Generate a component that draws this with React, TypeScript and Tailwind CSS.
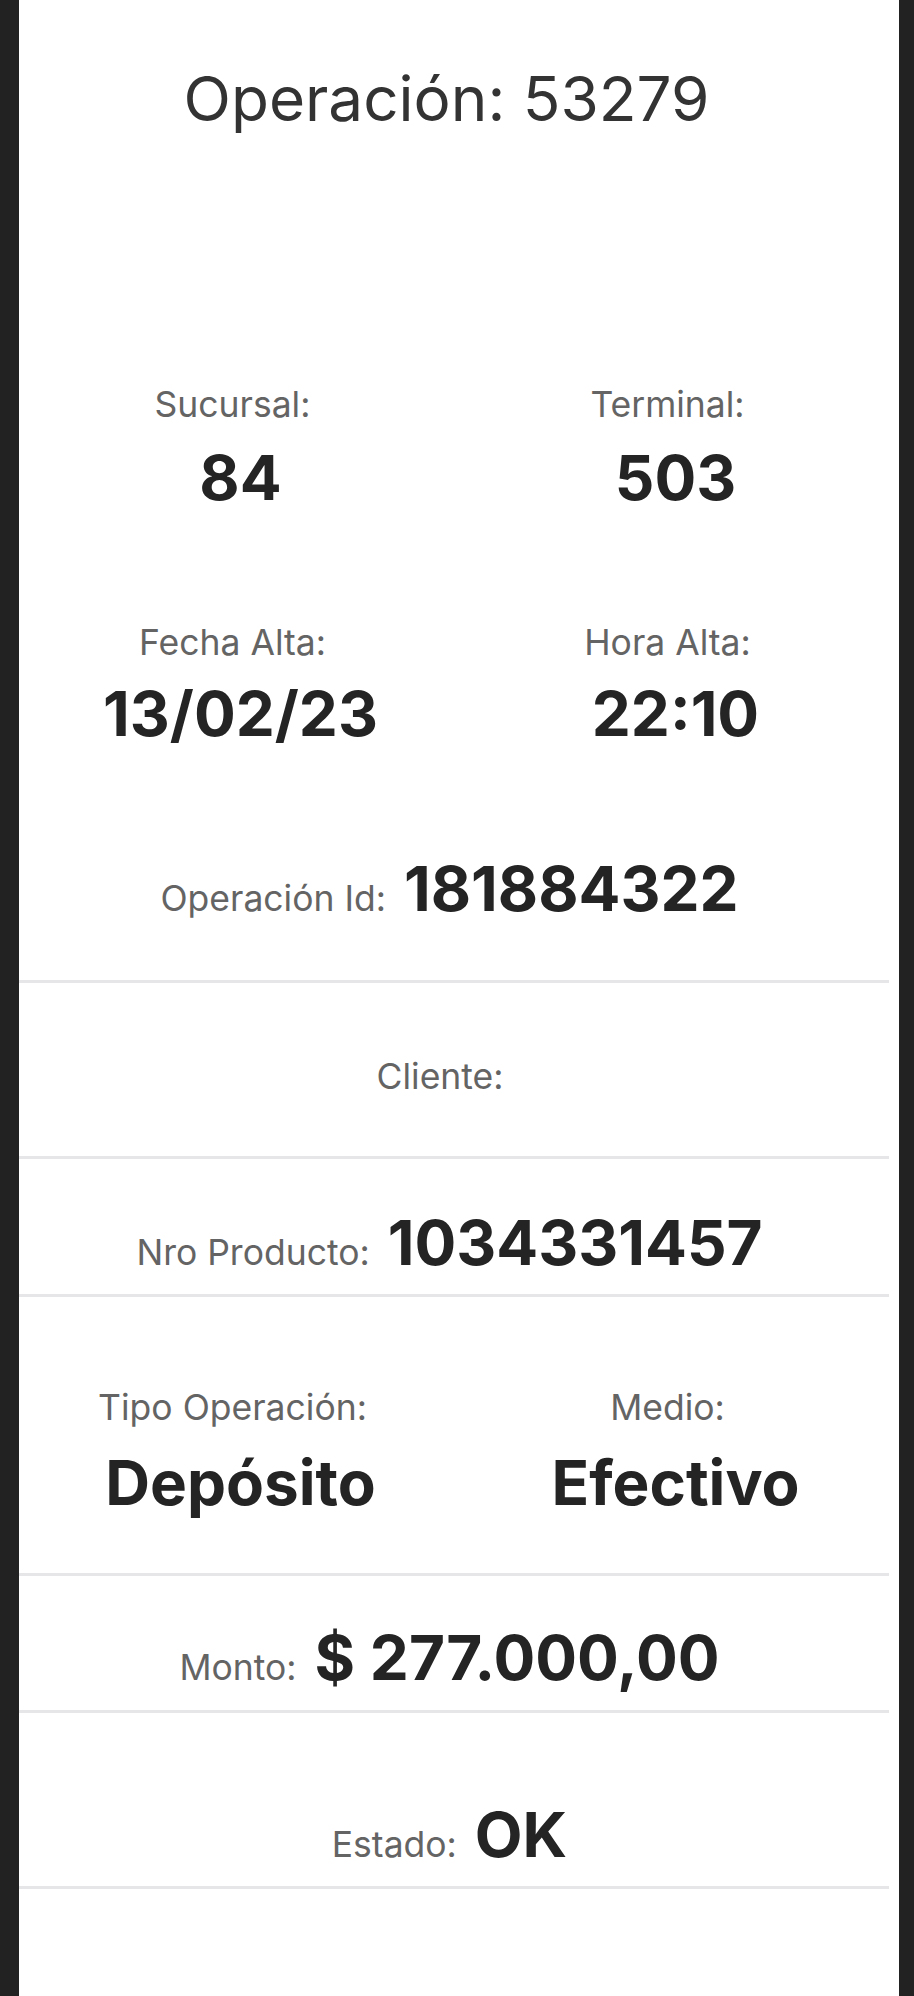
import React from "react";

const font = { fontFamily: "Inter, 'Noto Sans', sans-serif" };

function Divider() {
  return <div className="h-[3px] bg-[#e6e6e9] mr-[10px]" />;
}

function Field({ label, value, valueH }: { label: string; value: string; valueH: string }) {
  return (
    <div className="flex flex-col items-center">
      <div className="h-[60px] pt-[3px] flex items-center pr-[8px] text-[35.5px] leading-none text-[#646464]">{label}</div>
      <div className={`${valueH} flex items-center pl-[8px] text-[62px] leading-none font-bold text-[#242424]`}>{value}</div>
    </div>
  );
}

function Inline({ label, value }: { label: string; value: string }) {
  return (
    <div className="flex items-baseline justify-center gap-[18px] pr-[19px]">
      <span className="text-[35.5px] leading-none text-[#646464]">{label}</span>
      <span className="text-[62px] leading-none font-bold text-[#242424]">{value}</span>
    </div>
  );
}

export default function App() {
  return (
    <div className="min-h-[1996px] w-full bg-[#222222] pl-[19px] pr-[15px]" style={font}>
      <div className="min-h-[1996px] bg-white">
        <div className="h-[198px] flex items-center justify-center pr-[25px] text-[62px] leading-none text-[#333333]">
          Operación: 53279
        </div>
        <div className="h-[175px]" />
        <div className="grid grid-cols-2 pr-[10px]">
          <Field label="Sucursal:" value="84" valueH="h-[90px]" />
          <Field label="Terminal:" value="503" valueH="h-[90px]" />
        </div>
        <div className="h-[88px]" />
        <div className="grid grid-cols-2 pr-[10px]">
          <Field label="Fecha Alta:" value="13/02/23" valueH="h-[86px]" />
          <Field label="Hora Alta:" value="22:10" valueH="h-[86px]" />
        </div>
        <div className="h-[87px]" />
        <div className="h-[86px] pt-[3px] flex items-center justify-center">
          <Inline label="Operación Id:" value="181884322" />
        </div>
        <div className="h-[50px]" />
        <Divider />
        <div className="h-[173px] pt-[15px] flex items-center justify-center pr-[38px] text-[35.5px] leading-none text-[#646464]">
          Cliente:
        </div>
        <Divider />
        <div className="h-[135px] pt-[33px] flex items-center justify-center">
          <Inline label="Nro Producto:" value="1034331457" />
        </div>
        <Divider />
        <div className="h-[276px] pt-[79px]">
          <div className="grid grid-cols-2 pr-[10px]">
            <Field label="Tipo Operación:" value="Depósito" valueH="h-[94px]" />
            <Field label="Medio:" value="Efectivo" valueH="h-[94px]" />
          </div>
        </div>
        <Divider />
        <div className="h-[134px] pt-[30px] flex items-center justify-center">
          <Inline label="Monto:" value="$ 277.000,00" />
        </div>
        <Divider />
        <div className="h-[173px] pt-[71px] flex items-center justify-center">
          <Inline label="Estado:" value="OK" />
        </div>
        <Divider />
      </div>
    </div>
  );
}
